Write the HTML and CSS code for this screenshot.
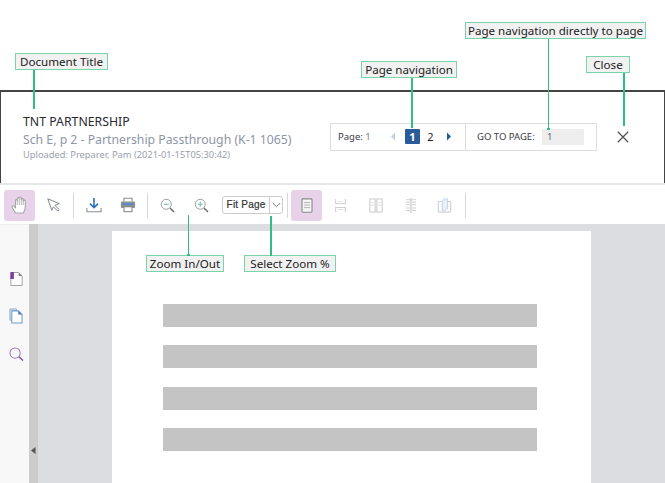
FILE: index.html
```html
<!DOCTYPE html>
<html lang="en">
<head>
<meta charset="utf-8">
<title>Document viewer</title>
<link rel="stylesheet" href="styles.css">
</head>
<body>
<div class="app">
  <header class="doc-header">
    <div class="doc-info">
      <div class="doc-title">TNT PARTNERSHIP</div>
      <div class="doc-sub">Sch E, p 2 - Partnership Passthrough (K-1 1065)</div>
      <div class="doc-meta">Uploaded: Preparer, Pam (2021-01-15T05:30:42)</div>
    </div>
    <div class="nav-box">
      <div class="nav-pages">
        <span class="page-now">Page: <span class="page-now-num">1</span></span>
        <svg class="arrow" width="6" height="9" viewBox="0 0 6 9"><path d="M5 0.500v8L1 4.500z" fill="#c3d0de"/></svg>
        <span class="page-num active">1</span>
        <span class="page-num">2</span>
        <svg class="arrow" width="6" height="9" viewBox="0 0 6 9"><path d="M1 0.500v8l4-4z" fill="#1f5a99"/></svg>
      </div>
      <div class="nav-goto">
        <span class="goto-label">GO TO PAGE:</span>
        <span class="goto-input">1</span>
      </div>
    </div>
    <svg class="close" width="12" height="12" viewBox="0 0 12 12"><path d="M.8.8l10.4 10.4M11.2.8L.8 11.2" stroke="#555" stroke-width="1.300" fill="none"/></svg>
  </header>

  <div class="toolbar">
    <button class="tool active"><svg width="20" height="20" viewBox="0 0 20 20"><path d="M5.500 18c-1-2-3-4.500-3.500-6-.3-1 1-1.800 2-.8l1.500 1.800V5.500c0-1.300 1.800-1.300 1.800 0V3.500c0-1.300 2-1.300 2 0V3c0-1.300 2-1.300 2 0v1.500c0-1.200 2-1.200 2 0V6c0-1.200 2-1.200 2 0v6c0 2.500-1 4-2 6z" fill="#fff" stroke="#a5a5a5" stroke-width="1.100" stroke-linejoin="round"/><path d="M7.300 5v5M9.300 3.500V10M11.300 3.500V10M13.300 5v5" stroke="#a5a5a5" stroke-width=".8"/></svg></button>
    <button class="tool"><svg width="16" height="16" viewBox="0 0 18 18"><path d="M2 2l13 5.500-5 1.800 5 5-1.700 1.700-5-5L6.500 15z" fill="#fff" stroke="#80858c" stroke-width="1.100" stroke-linejoin="round"/></svg></button>
    <span class="sep"></span>
    <button class="tool"><svg width="16" height="16" viewBox="0 0 18 18"><path d="M9 1v11M4.500 7.500L9 12l4.500-4.500" stroke="#2f6fb5" stroke-width="1.800" fill="none"/><path d="M1 12.500v4h16v-4" stroke="#8a8f96" stroke-width="1.200" fill="none"/></svg></button>
    <button class="tool"><svg width="16" height="16" viewBox="0 0 18 18"><path d="M4.500 5V1.500h9V5" fill="#fff" stroke="#888" stroke-width="1.200"/><rect x="1" y="5" width="16" height="7.500" rx="1.500" fill="#8a8f95"/><rect x="2.500" y="7.500" width="13" height="1.500" fill="#4f8ccb"/><rect x="4.500" y="11" width="9" height="5.500" fill="#fff" stroke="#888" stroke-width="1.200"/></svg></button>
    <span class="sep"></span>
    <button class="tool"><svg width="15" height="15" viewBox="0 0 18 18"><circle cx="7.500" cy="7.500" r="6" fill="#fff" stroke="#9a9fa4" stroke-width="1.200"/><path d="M4.500 7.500h6" stroke="#70bdb2" stroke-width="1.300"/><path d="M12 12l4.800 4.800" stroke="#666" stroke-width="1.700"/></svg></button>
    <button class="tool"><svg width="15" height="15" viewBox="0 0 18 18"><circle cx="7.500" cy="7.500" r="6" fill="#fff" stroke="#9a9fa4" stroke-width="1.200"/><path d="M4.500 7.500h6M7.500 4.500v6" stroke="#70bdb2" stroke-width="1.300"/><path d="M12 12l4.800 4.800" stroke="#666" stroke-width="1.700"/></svg></button>
    <div class="zoom-select">
      <span class="zoom-value">Fit Page</span>
      <span class="zoom-caret"><svg width="9" height="6" viewBox="0 0 9 6"><path d="M.8 1l3.700 3.700L8.200 1" stroke="#777" stroke-width="1" fill="none"/></svg></span>
    </div>
    <span class="sep sep-tight"></span>
    <button class="tool active"><svg width="12" height="15" viewBox="0 0 14 18"><rect x="1" y="1" width="12" height="16" rx="1" fill="#f4f4f4" stroke="#888" stroke-width="1.300"/><path d="M3.500 5.500h7M3.500 8.500h7M3.500 11.500h7" stroke="#a8a8a8"/></svg></button>
    <button class="tool"><svg width="13" height="15" viewBox="0 0 16 18"><path d="M2 1v5.500h12V1M2 17v-5.500h12V17" fill="none" stroke="#cfcfcf" stroke-width="1.300"/><path d="M4.500 4h7M4.500 14h7" stroke="#dcdcdc"/></svg></button>
    <button class="tool tool-shift"><svg width="14" height="15" viewBox="0 0 16 17"><rect x="1" y="1" width="6" height="15" fill="#fff" stroke="#cfcfcf" stroke-width="1.300"/><rect x="9" y="1" width="6" height="15" fill="#fff" stroke="#cfcfcf" stroke-width="1.300"/><path d="M2.500 5h3M2.500 8h3M10.500 5h3M10.500 8h3" stroke="#dedede"/></svg></button>
    <button class="tool tool-shift"><svg width="12" height="15" viewBox="0 0 14 18"><path d="M1 2h5M8 2h5M1 5h5M8 5h5M1 8h5M8 8h5M1 12h5M8 12h5M1 15h5M8 15h5" stroke="#cfcfcf" stroke-width="1.300"/><path d="M7 0v18" stroke="#cfcfcf" stroke-width="1.600"/></svg></button>
    <button class="tool"><svg width="15" height="15" viewBox="0 0 16 17"><rect x="1" y="4" width="14" height="12" rx="1" fill="#fff" stroke="#cfcfcf" stroke-width="1.200"/><path d="M5.500 3.500L8 1h3.500v11L8 14.500H5.500z" fill="#e8f0f8" stroke="#b7cee5"/></svg></button>
    <span class="sep"></span>
  </div>

  <div class="workspace">
    <aside class="sidebar">
      <svg width="13" height="16" viewBox="0 0 15 17"><path d="M1 1h9l4 4v11H1z" fill="#fff" stroke="#a0a0a0" stroke-width="1.100"/><rect x="0.500" y="0.500" width="4" height="8" fill="#7c3fa4"/><path d="M10 1l4 4h-4z" fill="#7f7f7f"/></svg>
      <svg width="14" height="16" viewBox="0 0 15 17"><path d="M1 1h7v12H1z" fill="#d8e4f1" stroke="#88a9cd"/><path d="M3 3h7l4 4v9H3z" fill="#fff" stroke="#6f9bc9" stroke-width="1.100"/><path d="M10 3l4 4h-4z" fill="#3d74b4"/></svg>
      <svg class="side-search" width="15" height="15" viewBox="0 0 16 16"><circle cx="6.500" cy="6.500" r="5.500" fill="none" stroke="#9f78c0" stroke-width="1.100"/><path d="M10.500 10.500l4.500 4" stroke="#7c4aa5" stroke-width="1.500"/></svg>
    </aside>
    <div class="splitter"><svg width="5" height="7" viewBox="0 0 5 7"><path d="M4.500 0v7L0 3.500z" fill="#555"/></svg></div>
    <main class="viewer">
      <div class="page">
        <div class="bar"></div>
        <div class="bar"></div>
        <div class="bar"></div>
        <div class="bar"></div>
      </div>
    </main>
  </div>
</div>

<span class="callout c-title">Document Title</span>
<span class="leader l-title"></span>
<span class="callout c-nav">Page navigation</span>
<span class="leader l-nav"></span>
<span class="callout c-direct">Page navigation directly to page</span>
<span class="leader l-direct"></span>
<span class="callout c-close">Close</span>
<span class="leader l-close"></span>
<span class="callout c-zoom">Zoom In/Out</span>
<span class="leader l-zoom"></span>
<span class="callout c-select">Select Zoom %</span>
<span class="leader l-select"></span>
</body>
</html>
```
FILE: styles.css
```css
* { box-sizing: border-box; }
html, body { margin: 0; height: 100%; overflow: hidden; background: #fff; }
body { position: relative; font-family: "Noto Sans", "Open Sans", sans-serif; }
.app { display: flex; flex-direction: column; height: 483px; padding-top: 90px; }

.doc-header {
  height: 93px; flex: none;
  display: flex; align-items: center;
  padding: 0 35px 2px 23px;
  border: 1px solid #444; border-top-width: 2px; border-bottom: 0;
}
.doc-info { flex: 1; margin-left: -1px; padding-top: 1px; }
.doc-title { font-size: 12.300px; line-height: 17px; color: #2a2a33; }
.doc-sub { font-size: 12.250px; line-height: 19px; color: #8e96a8; }
.doc-meta { font-size: 9.300px; line-height: 12px; color: #9aa0ae; }

.nav-box { display: flex; align-items: center; width: 267px; height: 28px; border: 1px solid #ddd; margin-right: 20px; }
.nav-pages { width: 135px; height: 100%; display: flex; align-items: center; padding-left: 7px; border-right: 1px solid #ddd; }
.page-now { width: 52px; font-size: 9.500px; color: #3a3a4a; }
.page-now-num { color: #6f7f95; }
.arrow { flex: none; }
.page-num { width: 15px; height: 15px; margin-left: 3px; text-align: center; font-size: 11px; line-height: 15px; color: #222; }
.page-num.active { background: #2b5c9a; color: #fff; border-radius: 1px; font-weight: 700; margin-left: 9px; }
.page-num + .arrow { margin-left: 8px; }
.nav-goto { display: flex; align-items: center; flex: 1; padding-left: 11px; }
.goto-label { font-size: 9.500px; color: #3a3a44; width: 65px; }
.goto-input { width: 42px; height: 16px; padding-left: 5px; background: #eee; border-radius: 1px; font-size: 9.500px; line-height: 16px; color: #666; }
.close { flex: none; }

.toolbar {
  height: 41px; flex: none; display: flex; align-items: center;
  padding: 1px 0 0 4px; gap: 3px;
  border-top: 2px solid #e6e6e6;
  background: #fff;
}
.tool { width: 31px; height: 31px; padding: 0; border: 0; border-radius: 3px; background: none; display: flex; align-items: center; justify-content: center; flex: none; }
.tool.active { background: #e8d2ea; }
.tool-shift { margin-left: 1px; }
.sep { width: 1px; height: 25px; margin: 0 1px; background: #d8d8d8; flex: none; }
.sep-tight { margin: 0 0 0 1px; }
.toolbar > .tool + .sep:last-child { margin-left: 2px; }
.zoom-select { display: flex; width: 61px; height: 18px; margin-left: 2px; border: 1px solid #ccc; border-radius: 3px; background: #fff; }
.zoom-value { flex: 1; font-family: "Liberation Sans", Arial, sans-serif; font-size: 10px; font-weight: 400; line-height: 16px; text-align: center; color: #333; letter-spacing: .2px; -webkit-text-stroke: .2px #333; }
.zoom-caret { width: 13px; display: flex; align-items: center; justify-content: center; border-left: 1px solid #ccc; }

.workspace { flex: 1; display: flex; min-height: 0; }
.sidebar { width: 29px; background: #f8f8f8; display: flex; flex-direction: column; align-items: center; gap: 21px; padding: 46px 0 0 3px; border-top: 1px solid #eee; }
.side-search { margin-top: 2px; }
.splitter { width: 9px; background: #ccc; display: flex; align-items: flex-end; justify-content: center; padding-bottom: 29px; }
.viewer { flex: 1; background: #dcdde0; padding: 7px 74px 0; overflow: hidden; }
.page { height: 260px; background: #fff; padding: 73px 54px 0 51px; display: flex; flex-direction: column; gap: 18.400px; }
.bar { height: 23px; background: #c4c4c4; flex: none; }

.callout {
  position: absolute; height: 17px; padding: 0;
  background: #f1f1f1; border: 1px solid #7ad4aa;
  font-size: 11.600px; line-height: 15px; color: #222; text-align: center; white-space: nowrap;
}
.leader { position: absolute; width: 1.500px; background: #2fbf85; }
.leader::after { content: ""; position: absolute; left: -.5px; bottom: -1px; width: 2.500px; height: 2.500px; background: #2fbf85; }
.c-title { left: 15px; top: 53px; width: 93px; }
.l-title { left: 33px; top: 70px; height: 38px; }
.c-nav { left: 361px; top: 61px; width: 96px; }
.l-nav { left: 411px; top: 78px; height: 49px; }
.c-direct { left: 465px; top: 22px; width: 181px; }
.l-direct { left: 547.500px; top: 39px; height: 90px; }
.c-close { left: 586px; top: 56px; width: 44px; }
.l-close { left: 623px; top: 73px; height: 52px; }
.c-zoom { left: 146px; top: 255px; width: 78px; }
.l-zoom { left: 187.500px; top: 215px; height: 40px; }
.c-select { left: 244px; top: 255px; width: 92px; }
.l-select { left: 270px; top: 216px; height: 39px; }
```
